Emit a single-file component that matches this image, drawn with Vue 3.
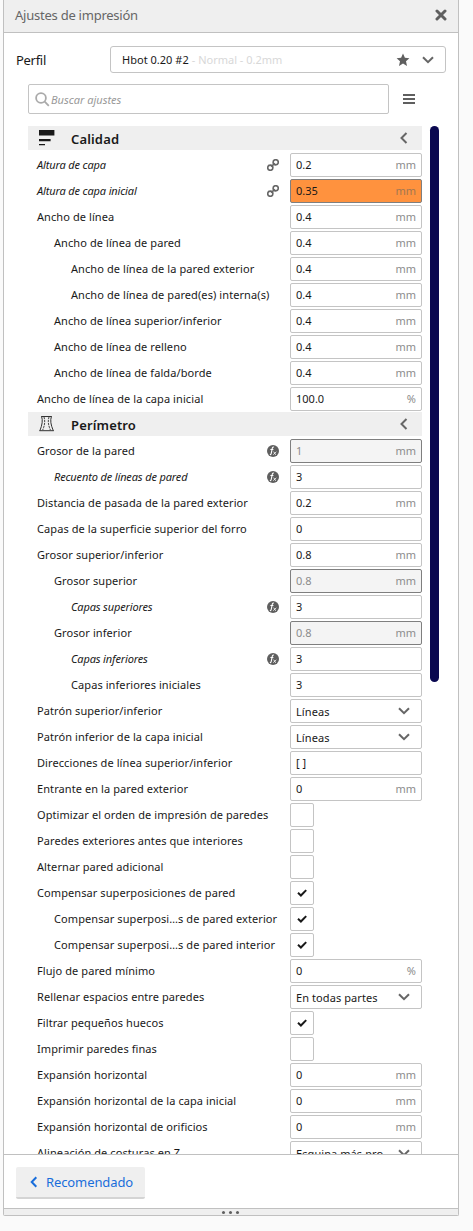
<script setup>
const mm = (label, value, level = 0, extra = {}) => ({ type: 'field', label, value, unit: 'mm', level, ...extra })
const num = (label, value, level = 0, extra = {}) => ({ type: 'field', label, value, unit: '', level, ...extra })
const pct = (label, value) => ({ type: 'field', label, value, unit: '%', level: 0 })
const select = (label, value) => ({ type: 'select', label, value, level: 0 })
const check = (label, on, level = 0) => ({ type: 'check', label, on, level })

const sections = [
  {
    title: 'Calidad',
    icon: 'quality',
    rows: [
      mm('Altura de capa', '0.2', 0, { icon: 'link', italic: true }),
      mm('Altura de capa inicial', '0.35', 0, { icon: 'link', italic: true, state: 'warning' }),
      mm('Ancho de línea', '0.4'),
      mm('Ancho de línea de pared', '0.4', 1),
      mm('Ancho de línea de la pared exterior', '0.4', 2),
      mm('Ancho de línea de pared(es) interna(s)', '0.4', 2),
      mm('Ancho de línea superior/inferior', '0.4', 1),
      mm('Ancho de línea de relleno', '0.4', 1),
      mm('Ancho de línea de falda/borde', '0.4', 1),
      pct('Ancho de línea de la capa inicial', '100.0'),
    ],
  },
  {
    title: 'Perímetro',
    icon: 'shell',
    rows: [
      mm('Grosor de la pared', '1', 0, { icon: 'fx', state: 'disabled' }),
      num('Recuento de líneas de pared', '3', 1, { icon: 'fx', italic: true }),
      mm('Distancia de pasada de la pared exterior', '0.2'),
      num('Capas de la superficie superior del forro', '0'),
      mm('Grosor superior/inferior', '0.8'),
      mm('Grosor superior', '0.8', 1, { state: 'disabled' }),
      num('Capas superiores', '3', 2, { icon: 'fx', italic: true }),
      mm('Grosor inferior', '0.8', 1, { state: 'disabled' }),
      num('Capas inferiores', '3', 2, { icon: 'fx', italic: true }),
      num('Capas inferiores iniciales', '3', 2),
      select('Patrón superior/inferior', 'Líneas'),
      select('Patrón inferior de la capa inicial', 'Líneas'),
      num('Direcciones de línea superior/inferior', '[ ]'),
      mm('Entrante en la pared exterior', '0'),
      check('Optimizar el orden de impresión de paredes', false),
      check('Paredes exteriores antes que interiores', false),
      check('Alternar pared adicional', false),
      check('Compensar superposiciones de pared', true),
      check('Compensar superposi…s de pared exterior', true, 1),
      check('Compensar superposi…s de pared interior', true, 1),
      pct('Flujo de pared mínimo', '0'),
      select('Rellenar espacios entre paredes', 'En todas partes'),
      check('Filtrar pequeños huecos', true),
      check('Imprimir paredes finas', false),
      mm('Expansión horizontal', '0'),
      mm('Expansión horizontal de la capa inicial', '0'),
      mm('Expansión horizontal de orificios', '0'),
      select('Alineación de costuras en Z', 'Esquina más pro…'),
    ],
  },
]
</script>

<template>
  <div class="panel">
    <header class="titlebar">
      <span>Ajustes de impresión</span>
      <svg class="close" width="12" height="12" viewBox="0 0 12 12"><path d="M2 2L10 10M10 2L2 10" /></svg>
    </header>

    <div class="profile">
      <span class="profile-label">Perfil</span>
      <div class="profile-box">
        <span class="profile-name">Hbot 0.20 #2</span>
        <span class="profile-detail">- Normal - 0.2mm</span>
        <svg class="star" width="14" height="14" viewBox="0 0 14 14"><path d="M7 .6L8.9 4.8L13.4 5.2L10 8.3L11 12.9L7 10.5L3 12.9L4 8.3L.6 5.2L5.1 4.8Z" /></svg>
        <svg class="stroke" width="12" height="8" viewBox="0 0 12 8"><path d="M1 1.2L6 6.2L11 1.2" /></svg>
      </div>
    </div>

    <div class="search-row">
      <div class="search">
        <svg class="lens" width="15" height="15" viewBox="0 0 15 15"><circle cx="6" cy="6" r="4.9" /><path d="M9.7 9.7L13.8 13.8" /></svg>
        <span>Buscar ajustes</span>
      </div>
      <div class="burger"><i></i><i></i><i></i></div>
    </div>

    <div class="scroll-area">
      <div class="settings">
        <section v-for="s in sections" :key="s.title">
          <div class="category">
            <svg v-if="s.icon === 'quality'" class="cat-icon" width="16" height="16" viewBox="0 0 16 16">
              <path d="M0 0H15.4V5.4H0ZM0 9H11.6V11.2H0ZM0 14H6V15.2H0Z" />
            </svg>
            <svg v-else class="cat-icon outline" width="16" height="16" viewBox="0 0 16 16">
              <path d="M2.2 .5H12.8M.4 14.7H14.8M2.6 .5C3.9 4.5 3.3 8.5 .9 14.7M12.4 .5C11.1 4.5 11.7 8.5 14.3 14.7" />
              <path class="dash" d="M5 1C6.3 5 5.8 9 3.7 14M10 1C8.7 5 9.2 9 11.4 14" />
            </svg>
            <span class="cat-title">{{ s.title }}</span>
            <svg class="stroke cat-arrow" width="8" height="12" viewBox="0 0 8 12"><path d="M6.5 1L1.5 6L6.5 11" /></svg>
          </div>
          <div v-for="r in s.rows" :key="r.label" class="row">
            <span class="label" :class="['level-' + r.level, { italic: r.italic }]">{{ r.label }}</span>
            <svg v-if="r.icon === 'link'" class="row-icon link" width="12" height="12" viewBox="0 0 12 12">
              <circle cx="8.7" cy="3.3" r="2.6" /><circle cx="3.3" cy="8.7" r="2.6" /><path d="M4.2 7.8L7.8 4.2" />
            </svg>
            <svg v-if="r.icon === 'fx'" class="row-icon fx" width="12" height="12" viewBox="0 0 12 12">
              <circle cx="6" cy="6" r="6" />
              <path d="M6.9 2.2C5.6 1.6 5.3 2.7 5 4.5L4.3 8.2C4.1 9.2 3.7 9.8 2.9 9.5M3.4 4.5H6.4" />
              <path class="thin" d="M6.5 6.8C7.6 6.5 7.5 9.9 9 9.5M9.3 6.8L6.3 9.6" />
            </svg>
            <div v-if="r.type === 'field'" class="field" :class="r.state">
              <span>{{ r.value }}</span><span class="unit">{{ r.unit }}</span>
            </div>
            <div v-else-if="r.type === 'select'" class="field select">
              <span>{{ r.value }}</span>
              <svg class="stroke" width="12" height="8" viewBox="0 0 12 8"><path d="M1 1.2L6 6.2L11 1.2" /></svg>
            </div>
            <div v-else class="checkbox">
              <svg v-if="r.on" width="10" height="8" viewBox="0 0 10 8"><path d="M1 3.8L3.9 6.5L9.2 1.1" /></svg>
            </div>
          </div>
        </section>
      </div>
      <div class="scrollbar"></div>
    </div>

    <footer class="footer">
      <button class="recommended">
        <svg width="8" height="12" viewBox="0 0 8 12"><path d="M6.3 1.2L1.7 6L6.3 10.8" /></svg>
        <span>Recomendado</span>
      </button>
    </footer>
    <div class="grip"><i></i><i></i><i></i></div>
  </div>
</template>

<style>
body { background: #fafafa; }
</style>

<style scoped>
* { box-sizing: border-box; }
.panel {
  width: 456px;
  height: 1216px;
  margin-left: 3px;
  display: flex;
  flex-direction: column;
  background: #fff;
  border: 1px solid #c0c0c0;
  border-top: 0;
  border-radius: 0 0 2px 2px;
  overflow: hidden;
  font-family: "Noto Sans", sans-serif;
  font-size: 11px;
  color: #191919;
  white-space: nowrap;
}
.titlebar {
  flex: none;
  height: 33px;
  display: flex;
  align-items: center;
  justify-content: space-between;
  padding: 0 11px 2px 11px;
  background: #efefef;
  border-bottom: 1px solid #c0c0c0;
  font-size: 13px;
  letter-spacing: -0.24px;
  color: #666;
}
.close { fill: none; stroke: #5f5f5f; stroke-width: 3; stroke-linecap: round; }
.profile {
  flex: none;
  display: flex;
  align-items: center;
  margin: 13px 12px 0;
  height: 27px;
}
.profile-label { width: 94px; font-size: 13px; letter-spacing: -0.3px; }
.profile-box {
  flex: 1;
  height: 27px;
  display: flex;
  align-items: center;
  padding: 0 11px;
  border: 1px solid #c4c4c4;
  border-radius: 3px;
}
.profile-name { letter-spacing: 0.02px; }
.profile-detail { margin-left: 3px; color: #d8d8d8; }
.star { margin-left: auto; margin-right: 12px; fill: #5f5f5f; }
.stroke { fill: none; stroke: #666; stroke-width: 2; }
.search-row { flex: none; display: flex; align-items: center; margin: 11px 0 0 24px; height: 30px; }
.search {
  width: 361px;
  height: 30px;
  display: flex;
  align-items: center;
  padding-left: 6px;
  gap: 1px;
  border: 1px solid #c4c4c4;
  border-radius: 2px;
  font-style: italic;
  color: #999;
}
.lens { fill: none; stroke: #aaa; stroke-width: 1.8; }
.burger { margin-left: 14px; display: grid; gap: 2px; }
.burger i { width: 12px; height: 2px; background: #5f5f5f; }
.scroll-area { flex: none; height: 1028px; margin: 12px 0 0 24px; display: flex; overflow: hidden; }
.settings { width: 394px; }
.scrollbar { width: 9px; height: 556px; margin-left: 8px; border-radius: 5px; background: #0a0850; }
.category {
  height: 24px;
  margin-bottom: 2px;
  display: flex;
  align-items: center;
  padding-left: 11px;
  background: #efefef;
  font-size: 13px;
  font-weight: 600;
}
.cat-title { padding-top: 2px; letter-spacing: 0.15px; }
.cat-icon { width: 16px; margin-right: 16px; fill: #191919; }
.cat-icon.outline { fill: none; stroke: #333; stroke-width: 1; }
.cat-icon .dash { stroke-width: 0.9; stroke-dasharray: 2.2 0.8; }
.cat-arrow { margin-left: auto; margin-right: 14px; }
.row { height: 26px; display: flex; align-items: center; }
.label { padding-left: 9px; flex: 1; line-height: 15px; padding-bottom: 1px; letter-spacing: 0.085px; }
.label.level-1 { padding-left: 26px; }
.label.level-2 { padding-left: 43px; }
.label.italic { font-style: italic; letter-spacing: -0.14px; }
.row-icon { margin-right: 11px; }
.link { fill: none; stroke: #666; stroke-width: 1.6; }
.fx circle { fill: #5f5f5f; }
.fx path { fill: none; stroke: #fff; stroke-width: 1.1; }
.fx .thin { stroke-width: 0.8; }
.field {
  width: 132px;
  height: 24px;
  display: flex;
  align-items: center;
  justify-content: space-between;
  padding: 0 5px 1px;
  border: 1px solid #c4c4c4;
  border-radius: 2px;
}
.unit { color: #8c8c8c; }
.field.warning { background: #ff923e; border-color: #7f7f7f; }
.field.warning .unit { color: #a27752; }
.field.disabled { background: #f4f4f4; border-color: #7f7f7f; color: #8c8c8c; }
.field.select { padding: 1px 11px 0 5px; letter-spacing: 0.08px; }
.field.select svg { margin-bottom: 1px; }
.checkbox {
  width: 24px;
  height: 24px;
  margin-right: 108px;
  display: flex;
  align-items: center;
  justify-content: center;
  border: 1px solid #c4c4c4;
  border-radius: 2px;
}
.checkbox path { fill: none; stroke: #191919; stroke-width: 2; }
.footer { flex: none; height: 54px; border-top: 1px solid #c0c0c0; padding: 12px; }
.recommended {
  width: 129px;
  height: 32px;
  display: flex;
  align-items: center;
  gap: 8px;
  padding: 0 0 0 14px;
  border: 0;
  border-bottom: 2px solid #d4d4d4;
  border-radius: 2px;
  background: #efefef;
  font: 13px "Noto Sans", sans-serif;
  letter-spacing: -0.1px;
  color: #196edb;
}
.recommended svg { fill: none; stroke: #196edb; stroke-width: 2; }
.grip {
  flex: 1;
  display: flex;
  justify-content: center;
  gap: 4px;
  padding: 2px 2px 0 0;
  background: #efefef;
  border-top: 1px solid #c0c0c0;
}
.grip i { width: 3px; height: 3px; border-radius: 50%; background: #5f5f5f; }
</style>
